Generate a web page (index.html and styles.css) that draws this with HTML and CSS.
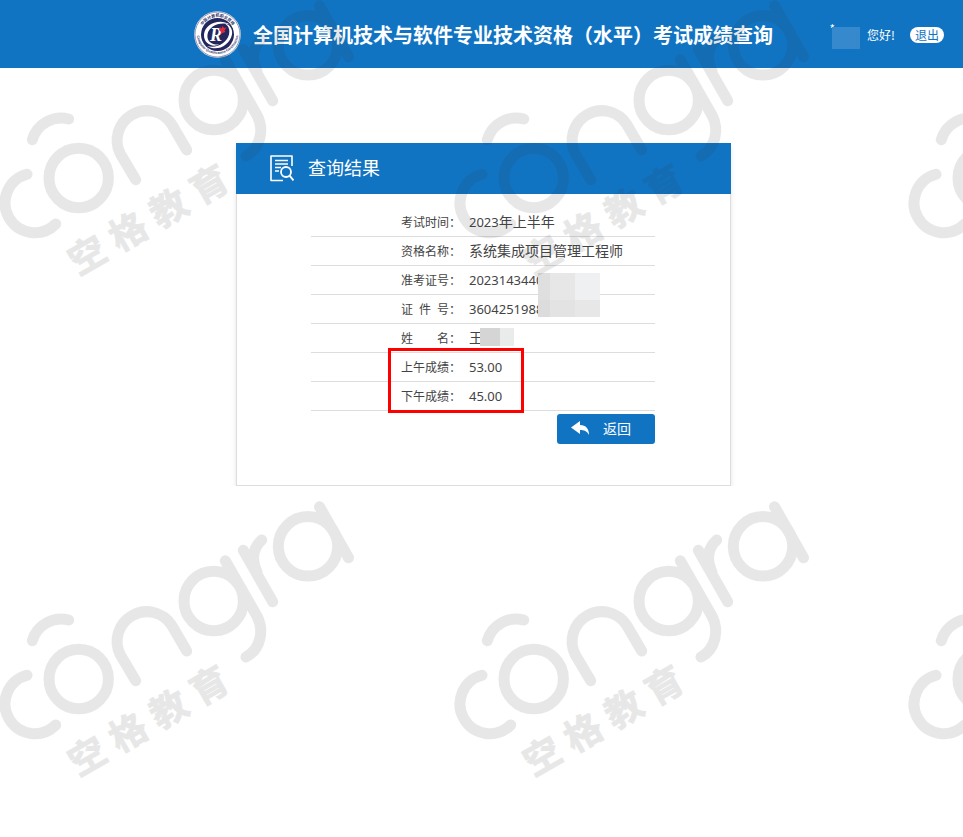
FILE: index.html
```html
<!DOCTYPE html>
<html lang="zh-CN">
<head>
  <meta charset="UTF-8">
  <meta name="viewport" content="width=device-width, initial-scale=1.0">
  <title>考试成绩查询</title>
  <link rel="stylesheet" href="styles.css">
</head>
<body>
  <header class="header">
    <div class="brand">
      <svg class="brand-logo" viewBox="0 0 94 94" aria-hidden="true">
        <defs>
          <path id="ringTop" d="M12 47a35 35 0 0 1 70 0"/>
          <path id="ringBottom" d="M5 44a42 42 0 0 0 84 0"/>
        </defs>
        <circle cx="47" cy="47" r="46.500" fill="#fff"/>
        <circle cx="47" cy="47" r="45" fill="none" stroke="#33356b" stroke-width="1"/>
        <circle cx="47" cy="47" r="33" fill="#23265c"/>
        <text class="ring-text"><textPath href="#ringTop" startOffset="50%" text-anchor="middle">中国计算机职业资格</textPath></text>
        <text class="ring-text ring-en"><textPath href="#ringBottom" startOffset="50%" text-anchor="middle">Computer Qualification Certification</textPath></text>
        <path d="M72 27C50 14 22 26 20 47c-1 17 15 27 31 20-16 1-26-6-24-20 3-16 22-26 45-20z" fill="#fff"/>
        <path d="M26 70c19 12 45 0 50-23 2-12-5-20-14-22 8 6 10 13 8 22-5 18-24 28-44 23z" fill="#fff"/>
        <text class="logo-r" x="32" y="60">R</text>
        <path d="M50 38l2-6 3 3 2-5 3 4 5-1-4 6 2 3-6 2-4 3 1-5z" fill="#e02b3d"/>
      </svg>
      <h1>全国计算机技术与软件专业技术资格（水平）考试成绩查询</h1>
    </div>
    <div class="user">
      <span class="user-name">*<i class="user-mask"></i></span>
      <span>您好!</span>
      <a class="logout" href="#">退出</a>
    </div>
  </header>

  <main class="card">
    <div class="card-head">
      <svg class="head-icon" viewBox="0 0 24 27" fill="none" stroke="#fff" aria-hidden="true">
        <path d="M22 11V1H1v24.500h12" stroke-width="1.600" stroke-linejoin="round"/>
        <path d="M5 5.500h13M5 9h13M5 12.500h6M5 16h4" stroke-width="1.700"/>
        <circle cx="16" cy="17" r="5" stroke-width="1.800"/>
        <path d="M19.500 20.500l4 5" stroke-width="2"/>
      </svg>
      <h2>查询结果</h2>
    </div>
    <div class="card-body">
      <div class="result">
        <table>
          <tr><th scope="row">考试时间：</th><td><span class="num">2023</span>年上半年</td></tr>
          <tr><th scope="row">资格名称：</th><td>系统集成项目管理工程师</td></tr>
          <tr><th scope="row">准考证号：</th><td><span class="num">2023143440</span></td></tr>
          <tr><th scope="row">证&ensp;件&ensp;号：</th><td><span class="num">3604251988</span></td></tr>
          <tr><th scope="row">姓&emsp;&emsp;名：</th><td>王</td></tr>
          <tr><th scope="row">上午成绩：</th><td><span class="num">53.00</span></td></tr>
          <tr><th scope="row">下午成绩：</th><td><span class="num">45.00</span></td></tr>
        </table>
        <div class="mask mask-number"><i></i><i></i><i></i><i></i><i></i><i></i></div>
        <div class="mask mask-name"><i></i><i></i></div>
        <div class="highlight"></div>
      </div>
      <button class="back" type="button">
        <svg viewBox="0 0 18 14" aria-hidden="true"><path d="M0 6.500L9 0v4c6 0 9 4 9 10-2-4-5-5-9-5v4z" fill="#fff"/></svg>
        返回
      </button>
    </div>
  </main>

  <svg class="watermark" aria-hidden="true">
    <g id="wm">
      <g fill="none" stroke="#333" stroke-width="11" stroke-linecap="round" stroke-linejoin="round">
        <path d="M27 174.300A29.700 29.700 0 1 0 55.700 224"/>
        <circle cx="78.700" cy="178" r="29.700"/>
        <path d="M32.300 139.700A30 30 0 0 1 68.700 119"/>
        <path d="M135.700 179.700L120.300 153.800A29.700 29.700 0 0 1 171.700 124.200L186.700 150"/>
        <circle cx="213.700" cy="100" r="29.700"/>
        <path d="M225.300 59.700L257.300 115.700C264 129 261 148 246 156"/>
        <path d="M243.300 49.300L272.700 100.700M261.700 39C253 47 251 58 257 71"/>
        <circle cx="308" cy="45.300" r="29.700"/>
        <path d="M319.500 5.700L348.500 56.700"/>
      </g>
      <text class="wm-text" transform="translate(78 276) rotate(-30)" x="0 47 94 141">空格教育</text>
    </g>
    <use href="#wm" x="455"/>
    <use href="#wm" x="909"/>
    <use href="#wm" y="501"/>
    <use href="#wm" x="455" y="501"/>
    <use href="#wm" x="909" y="501"/>
  </svg>
</body>
</html>
```

FILE: styles.css
```css
* {
    box-sizing: border-box;
}
body {
    margin: 0;
    font-family: "Noto Sans CJK SC", sans-serif;
    font-size: 14px;
    color: #444;
    background: #fff;
}
h1, h2 {
    margin: 0;
}
.header {
    display: grid;
    grid-template-columns: 1fr auto 1fr;
    align-items: center;
    height: 68px;
    padding: 0 19px 0 23px;
    background: #1174c3;
    color: #fff;
}
.brand {
    grid-column: 2;
    display: flex;
    align-items: center;
    gap: 12px;
}
.brand-logo {
    width: 47px;
    height: 47px;
}
.ring-text {
    font-size: 8px;
    font-weight: bold;
    fill: #33356b;
}
.ring-en {
    font-family: "Liberation Sans", sans-serif;
    font-size: 7px;
}
.logo-r {
    font: italic bold 36px "Liberation Serif", serif;
    fill: #fff;
}
.brand h1 {
    padding-top: 2px;
    font-size: 20px;
    line-height: 30px;
    white-space: nowrap;
}
.user {
    display: flex;
    justify-content: flex-end;
    align-items: center;
    gap: 7px;
    padding-top: 2px;
    font-size: 12px;
    line-height: 16px;
    white-space: nowrap;
}
.user-name {
    display: flex;
}
.user-mask {
    width: 28px;
    height: 22px;
    margin: 6px 0 0 -3px;
    background: #3589cc;
}
.logout {
    margin-left: 8px;
    padding: 0 5px;
    border-radius: 8px;
    background: #fff;
    color: #1174c3;
    text-decoration: none;
}
.card {
    width: 495px;
    max-width: 100%;
    margin: 75px auto 0;
    border: 1px solid #ddd;
    border-top: 0;
    box-shadow: 0 3px 5px rgba(0, 0, 0, 0.1);
    position: relative;
    left: 2px;
}
.card-head {
    display: flex;
    align-items: center;
    gap: 14px;
    height: 51px;
    margin: 0 -1px;
    padding-left: 34px;
    background: #1174c3;
    color: #fff;
}
.head-icon {
    width: 24px;
    height: 27px;
}
.card-head h2 {
    padding-bottom: 3px;
    font-size: 18px;
    font-weight: normal;
}
.card-body {
    display: flex;
    flex-direction: column;
    align-items: flex-end;
    padding: 14px 75px 41px 74px;
}
.result {
    position: relative;
    width: 100%;
}
table {
    width: 100%;
    border-collapse: separate;
    border-spacing: 0;
}
th, td {
    height: 29px;
    padding: 0;
    border-bottom: 1px solid #ddd;
    line-height: 20px;
    text-align: left;
}
td {
    padding-bottom: 2px;
}
th {
    width: 158px;
    padding-left: 90px;
    font-size: 12px;
    font-weight: normal;
}
.num {
    font-family: "Noto Sans", sans-serif;
    font-size: 13px;
}
.mask, .highlight {
    position: absolute;
}
.mask {
    display: grid;
}
.mask-number {
    top: 65px;
    left: 227px;
    width: 62px;
    height: 44px;
    grid-template-columns: 12px 25px 25px;
    grid-template-rows: 27px 17px;
    background: #e7e7e7;
}
.mask-number i:nth-child(1) {
    background: #dfdfdf;
}
.mask-number i:nth-child(3) {
    background: #eff0f2;
}
.mask-number i:nth-child(4) {
    background: #dcdcdc;
}
.mask-number i:nth-child(5) {
    background: #e3e3e4;
}
.mask-name {
    top: 120px;
    left: 169px;
    width: 34px;
    height: 18px;
    grid-template-columns: 20px 14px;
    background: #eaecec;
}
.mask-name i:first-child {
    background: #d5d5d5;
}
.highlight {
    top: 140px;
    left: 77px;
    width: 136px;
    height: 65px;
    border: 3px solid #f00;
}
.back {
    display: flex;
    align-items: center;
    gap: 14px;
    width: 98px;
    height: 30px;
    margin-top: 3px;
    padding: 0 14px 2px;
    border: 0;
    border-radius: 3px;
    background: #1174c3;
    color: #fff;
    font-family: inherit;
    font-size: 14px;
    cursor: pointer;
}
.back svg {
    width: 18px;
    height: 14px;
}
.watermark {
    position: absolute;
    top: 0;
    left: 0;
    width: 100%;
    height: 837px;
    opacity: 0.11;
    pointer-events: none;
}
.wm-text {
    font-size: 37px;
    font-weight: bold;
    fill: #333;
    stroke: #333;
    stroke-width: 1px;
}
```
